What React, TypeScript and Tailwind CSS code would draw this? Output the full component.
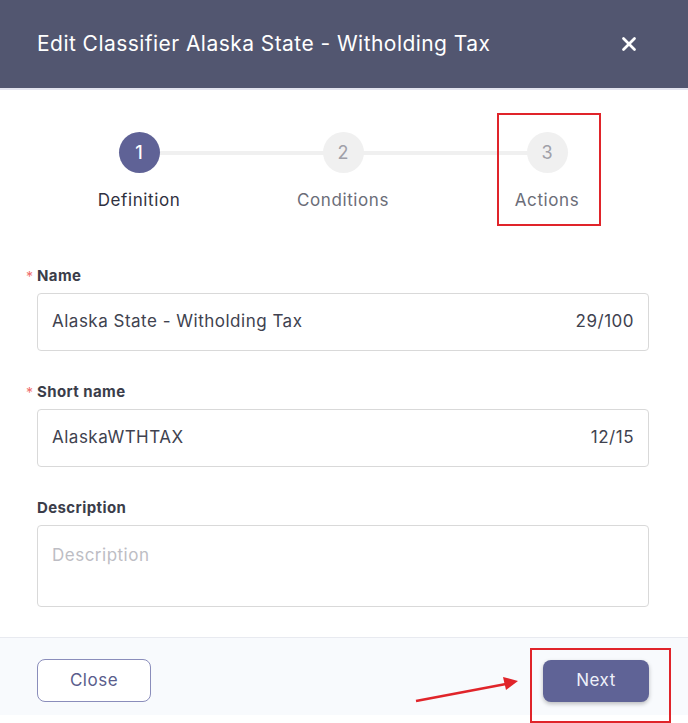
import React from "react";
import { X } from "lucide-react";

const STEPS = [
  { n: 1, label: "Definition", active: true },
  { n: 2, label: "Conditions", active: false },
  { n: 3, label: "Actions", active: false },
];

function Field({ label, required, value, counter }: { label: string; required?: boolean; value: string; counter: string }) {
  return (
    <div className="flex flex-col">
      <div className="relative h-[19px] text-[15px] font-bold leading-[19px] tracking-[0.4px] text-[#3b3d4a]">
        {required && <span className="absolute -left-[11px] top-[1px] text-[14px] font-normal text-[#ef6d6d]">*</span>}
        {label}
      </div>
      <div className="mt-[8px] flex h-[58px] items-center justify-between rounded-[4px] border border-[#d9d9d9] bg-white px-[14px] text-[17px] tracking-[0.5px] text-[#40424f]">
        <span>{value}</span>
        <span>{counter}</span>
      </div>
    </div>
  );
}

export default function App() {
  return (
    <div className="relative h-[723px] w-[688px] overflow-hidden bg-white" style={{ fontFamily: "Inter, 'Open Sans', sans-serif" }}>
      {/* Header */}
      <div className="flex h-[88px] items-center justify-between bg-[#525670] pl-[37px] pr-[48px]">
        <h1 className="text-[21px] font-normal tracking-[0.45px] text-white">Edit Classifier Alaska State - Witholding Tax</h1>
        <X size={22} strokeWidth={3} className="text-white" />
      </div>
      <div className="h-[2px] bg-[#e3e4ef]" />

      {/* Stepper */}
      <div className="relative mt-[42px] grid grid-cols-3 pl-[37px] pr-[39px]">
        <div className="absolute left-[139px] right-[141px] top-[19px] h-[4px] bg-[#f0f0f0]" />
        {STEPS.map((s) => (
          <div key={s.n} className="relative flex flex-col items-center">
            <div
              className={
                s.active
                  ? "flex h-[41px] w-[41px] items-center justify-center rounded-full bg-[#5f6296] text-[18px] font-medium text-white"
                  : "flex h-[41px] w-[41px] items-center justify-center rounded-full bg-[#f0f0f0] text-[18px] text-[#a0a0a8]"
              }
            >
              {s.n}
            </div>
            <div
              className={
                s.active
                  ? "mt-[15px] text-[17px] leading-[24px] tracking-[0.6px] text-[#2f3140]"
                  : "mt-[15px] text-[17px] leading-[24px] tracking-[0.6px] text-[#6b6d78]"
              }
            >
              {s.label}
            </div>
          </div>
        ))}
      </div>

      {/* Form */}
      <div className="mt-[54px] flex flex-col gap-[31px] pl-[37px] pr-[39px]">
        <Field label="Name" required value="Alaska State - Witholding Tax" counter="29/100" />
        <Field label="Short name" required value="AlaskaWTHTAX" counter="12/15" />
        <div className="flex flex-col">
          <div className="h-[19px] text-[15px] font-bold leading-[19px] tracking-[0.4px] text-[#3b3d4a]">Description</div>
          <div className="mt-[8px] h-[82px] rounded-[4px] border border-[#d9d9d9] bg-white pl-[14px] pt-[17px] text-[17px] tracking-[0.5px] text-[#bdbdc4]">
            Description
          </div>
        </div>
      </div>

      {/* Footer */}
      <div className="mt-[30px] flex h-[78px] items-start justify-between border-t border-[#e8eaf0] bg-[#f8fafd] pl-[37px] pr-[39px] pt-[21px]">
        <button className="h-[43px] w-[114px] rounded-[8px] border border-[#8a8dbb] bg-white text-[17px] tracking-[0.5px] text-[#5a5d8c]">Close</button>
        <button className="mt-[1px] h-[42px] w-[106px] rounded-[8px] bg-[#5f6396] text-[17px] tracking-[0.5px] text-[#eef0fa] shadow-[0_2px_4px_rgba(0,0,0,0.25)]">Next</button>
      </div>

      {/* Annotations */}
      <div className="absolute left-[497px] top-[113px] h-[113px] w-[104px] border-2 border-[#e0242a]" />
      <div className="absolute left-[530px] top-[648px] h-[75px] w-[141px] border-2 border-[#e0242a]" />
      <svg className="absolute left-0 top-0" width="688" height="723">
        <line x1="416" y1="701" x2="506" y2="684" stroke="#e0242a" strokeWidth="2.5" />
        <polygon points="518,681 503,677 506,690" fill="#e0242a" />
      </svg>
    </div>
  );
}
